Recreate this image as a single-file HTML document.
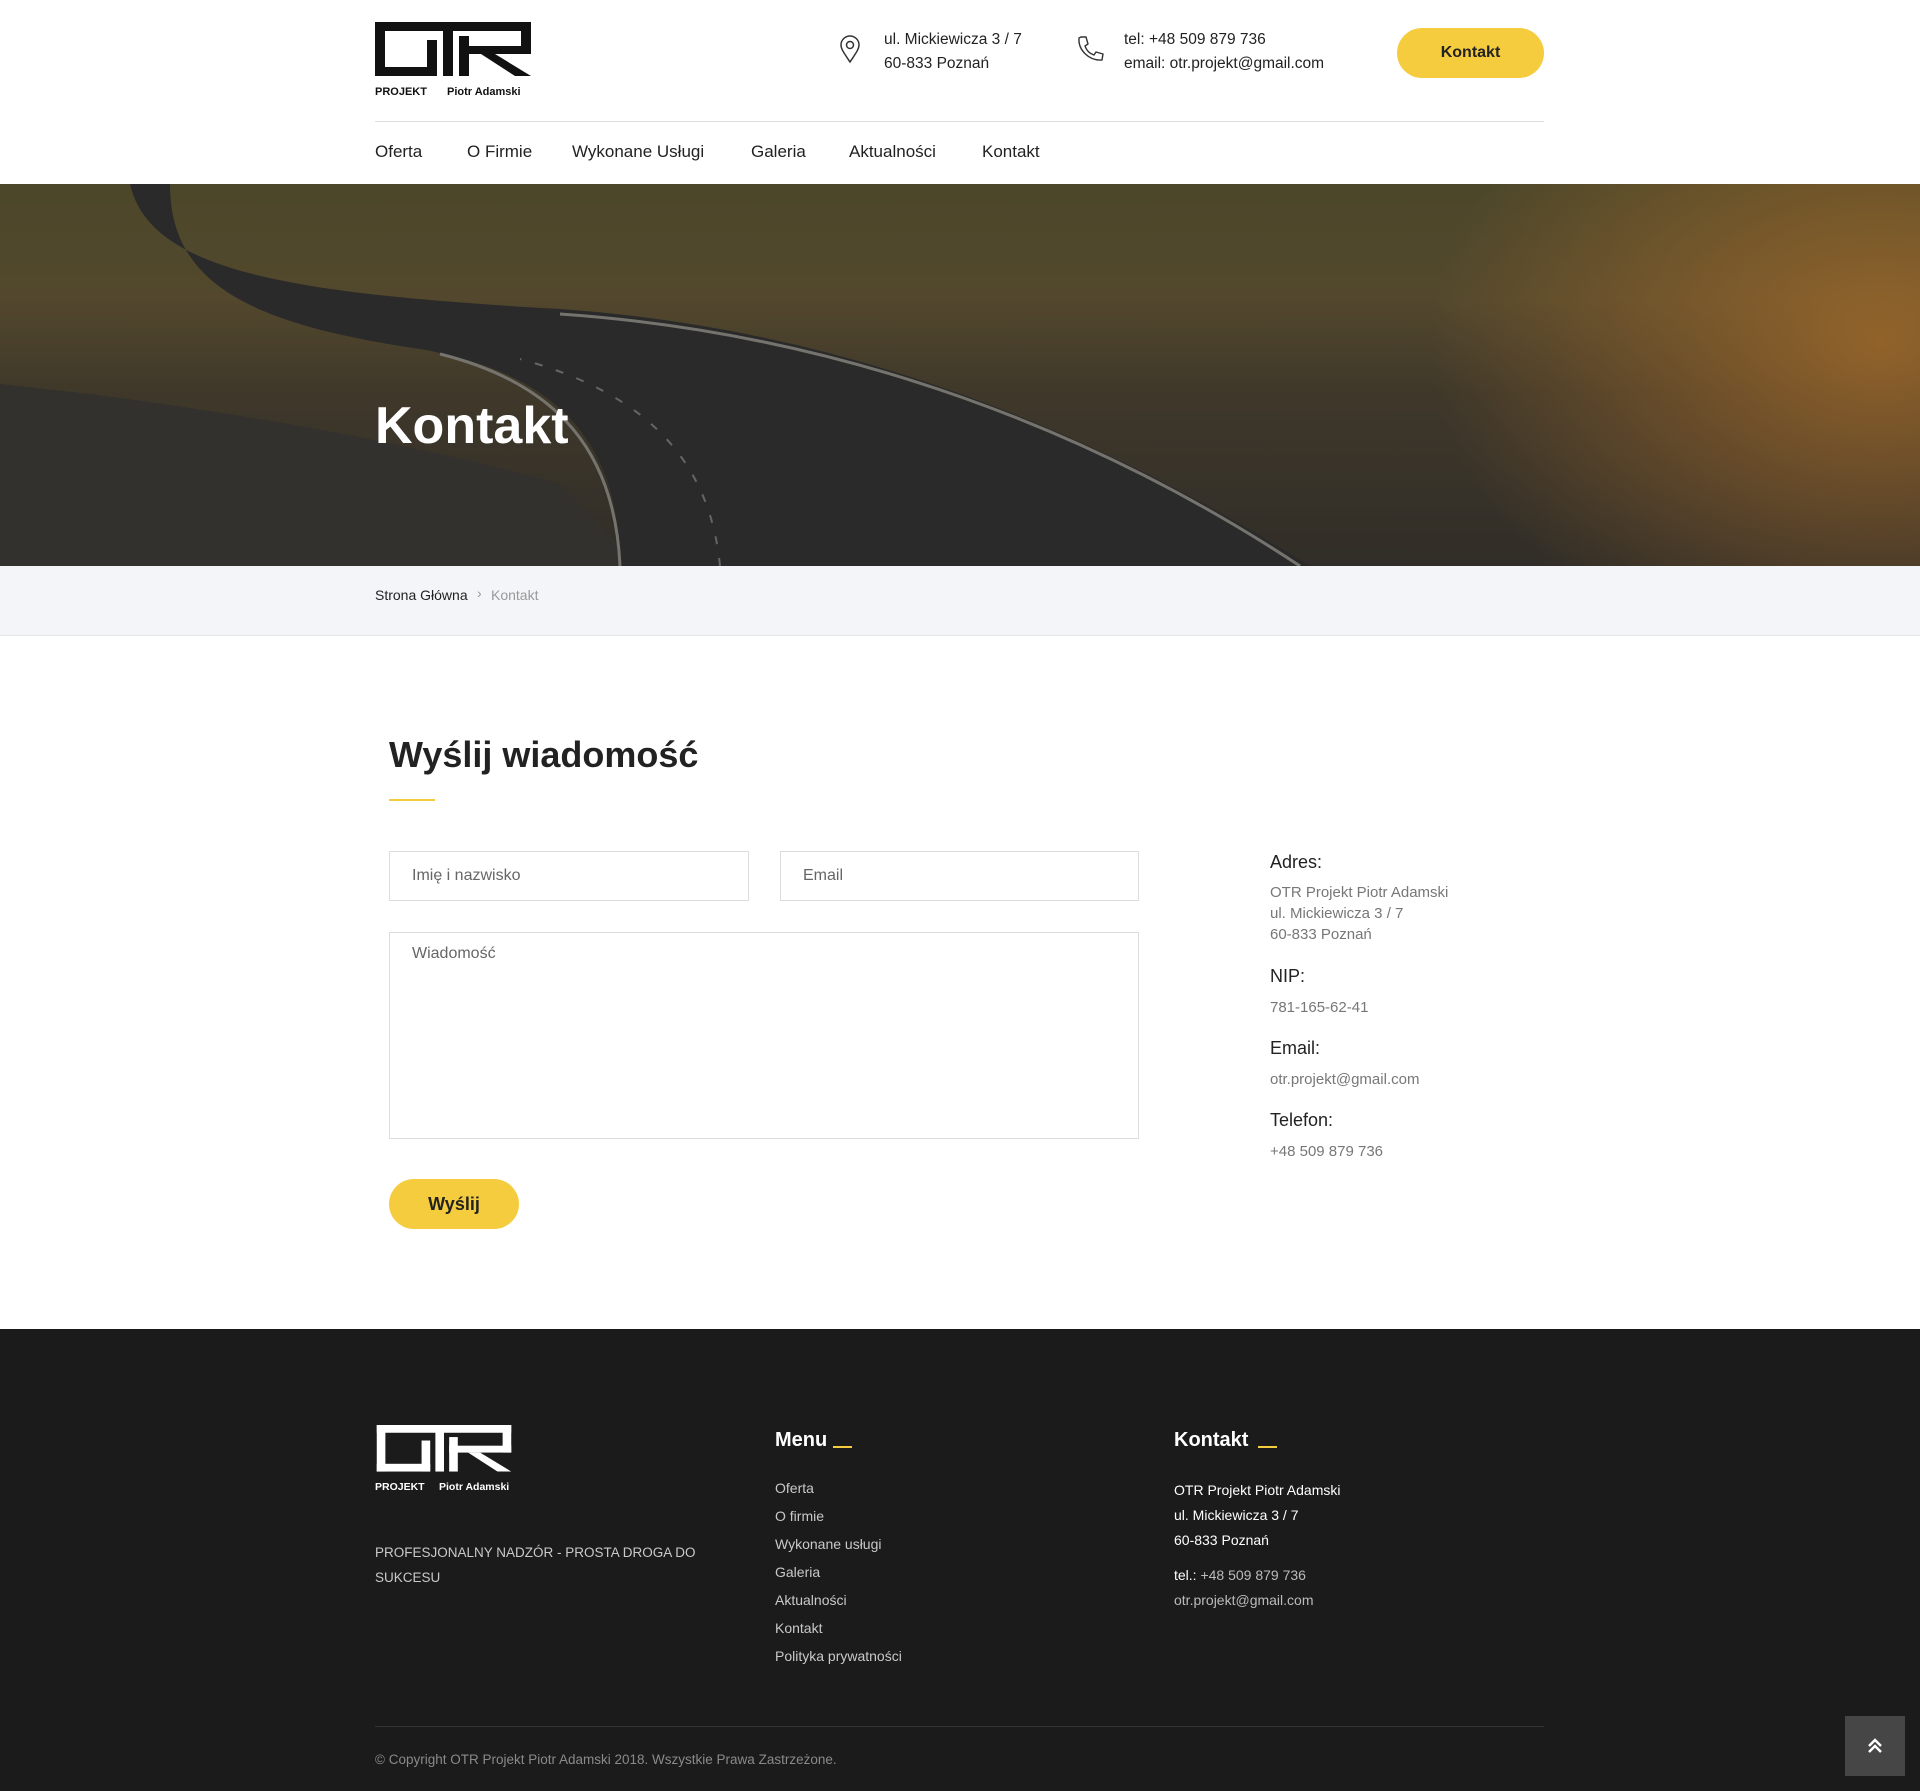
<!DOCTYPE html>
<html><head><meta charset="utf-8">
<style>
*{margin:0;padding:0;box-sizing:border-box}
body{width:1920px;height:1791px;position:relative;background:#fff;font-family:"Liberation Sans",sans-serif;color:#222;overflow:hidden}
.a{position:absolute;white-space:nowrap}
.nav{font-size:17px;color:#222;top:142px}
.hdr{font-size:15.5px;color:#222;line-height:24px}
.lbl{font-size:18px;color:#222}
.val{font-size:15px;color:#777;line-height:21px}
.inp{position:absolute;border:1px solid #dcdcdc;background:#fff;font-size:16px;color:#666;padding:0 22px}
.fm{font-size:14px;color:#c9c9c9}
.fk{font-size:14px;color:#fff}
</style></head><body>

<svg class="a" style="left:375px;top:22px" width="156" height="58" viewBox="0 0 156 58">
<g fill="#111">
<rect x="0" y="0" width="156" height="9"/>
<rect x="0" y="0" width="10" height="54"/>
<rect x="0" y="45" width="62" height="9"/>
<rect x="52" y="18" width="10" height="36"/>
<rect x="68" y="0" width="10" height="54"/>
<rect x="84" y="14" width="10" height="40"/>
<rect x="146" y="0" width="10" height="32"/>
<rect x="84" y="24" width="72" height="8"/>
<polygon points="106,32 120,32 156,54 140,54"/>
</g></svg>
<div class="a" style="left:375px;top:86px;font-size:11px;font-weight:bold;color:#111">PROJEKT</div>
<div class="a" style="left:447px;top:86px;font-size:11px;font-weight:bold;color:#111">Piotr Adamski</div>

<svg class="a" style="left:838px;top:34px" width="24" height="30" viewBox="0 0 24 30"><path d="M12 28 C6 19 3 15 3 11 A9 9 0 0 1 21 11 C21 15 18 19 12 28Z" fill="none" stroke="#333" stroke-width="1.5"/><circle cx="12" cy="11" r="3.5" fill="none" stroke="#333" stroke-width="1.5"/></svg>
<div class="a hdr" style="left:884px;top:28px">ul. Mickiewicza 3 / 7<br>60-833 Poznań</div>
<svg class="a" style="left:1075px;top:34px" width="30" height="30" viewBox="0 0 30 30"><path d="M6 3 L11 3 L13 10 L10 12 C12 17 14 19 19 21 L21 18 L28 20 L27 26 C14 27 3 16 4 4Z" fill="none" stroke="#333" stroke-width="1.4" stroke-linejoin="round"/></svg>
<div class="a hdr" style="left:1124px;top:28px">tel: +48 509 879 736<br>email: otr.projekt@gmail.com</div>
<div class="a" style="left:1397px;top:28px;width:147px;height:50px;border-radius:25px;background:#f5cc3d;font-size:16px;font-weight:bold;color:#222;text-align:center;line-height:50px">Kontakt</div>

<div class="a" style="left:375px;top:121px;width:1169px;height:1px;background:#ddd"></div>
<div class="a nav" style="left:375px">Oferta</div>
<div class="a nav" style="left:467px">O Firmie</div>
<div class="a nav" style="left:572px">Wykonane Usługi</div>
<div class="a nav" style="left:751px">Galeria</div>
<div class="a nav" style="left:849px">Aktualności</div>
<div class="a nav" style="left:982px">Kontakt</div>

<div class="a" style="left:0;top:184px;width:1920px;height:382px;overflow:hidden;background:linear-gradient(180deg,#5a5432 0%,#625535 30%,#4a4232 55%,#3a3630 100%)">
<div style="position:absolute;inset:0;background:radial-gradient(ellipse 450px 330px at 1880px 160px,rgba(200,130,50,.75),rgba(0,0,0,0))"></div>
<svg style="position:absolute;left:0;top:0" width="1920" height="382">
<path d="M0 382 L0 200 C200 220 420 260 560 300 L640 382Z" fill="#3c3a35"/>
<path d="M130 0 C150 90 300 110 560 125 C850 145 1100 250 1310 382 L620 382 C620 260 560 190 420 165 C250 140 170 100 170 0Z" fill="#333232"/>
<path d="M620 382 C615 270 560 200 440 170" fill="none" stroke="#8a8880" stroke-width="3"/>
<path d="M720 382 C710 280 650 210 520 175" fill="none" stroke="#777" stroke-width="2" stroke-dasharray="8 14"/>
<path d="M1300 382 C1100 250 850 150 560 130" fill="none" stroke="#8a8880" stroke-width="3"/>
</svg>
<div style="position:absolute;inset:0;background:rgba(0,0,0,.15)"></div>
</div>
<div class="a" style="left:375px;top:396px;font-size:52px;font-weight:bold;color:#fff">Kontakt</div>

<div class="a" style="left:0;top:566px;width:1920px;height:70px;background:#f4f5f8;border-bottom:1px solid #e6e6e6"></div>
<div class="a" style="left:375px;top:587px;font-size:14px;color:#222">Strona Główna</div>
<div class="a" style="left:477px;top:585px;font-size:14px;color:#999">›</div>
<div class="a" style="left:491px;top:587px;font-size:14px;color:#999">Kontakt</div>

<div class="a" style="left:389px;top:734px;font-size:36px;font-weight:bold;color:#222">Wyślij wiadomość</div>
<div class="a" style="left:389px;top:799px;width:46px;height:2px;background:#f5cc3d"></div>
<div class="inp" style="left:389px;top:851px;width:360px;height:50px;line-height:48px">Imię i nazwisko</div>
<div class="inp" style="left:780px;top:851px;width:359px;height:50px;line-height:48px">Email</div>
<div class="inp" style="left:389px;top:932px;width:750px;height:207px;padding-top:12px">Wiadomość</div>
<div class="a" style="left:389px;top:1179px;width:130px;height:50px;border-radius:25px;background:#f5cc3d;font-size:18px;font-weight:bold;text-align:center;line-height:50px;color:#222">Wyślij</div>

<div class="a lbl" style="left:1270px;top:852px">Adres:</div>
<div class="a val" style="left:1270px;top:882px">OTR Projekt Piotr Adamski<br>ul. Mickiewicza 3 / 7<br>60-833 Poznań</div>
<div class="a lbl" style="left:1270px;top:966px">NIP:</div>
<div class="a val" style="left:1270px;top:997px">781-165-62-41</div>
<div class="a lbl" style="left:1270px;top:1038px">Email:</div>
<div class="a val" style="left:1270px;top:1069px">otr.projekt@gmail.com</div>
<div class="a lbl" style="left:1270px;top:1110px">Telefon:</div>
<div class="a val" style="left:1270px;top:1141px">+48 509 879 736</div>

<div class="a" style="left:0;top:1329px;width:1920px;height:462px;background:#1b1b1b"></div>
<svg class="a" style="left:375px;top:1425px" width="138" height="50" viewBox="0 0 156 58">
<g fill="#fff">
<rect x="0" y="0" width="156" height="9"/>
<rect x="0" y="0" width="10" height="54"/>
<rect x="0" y="45" width="62" height="9"/>
<rect x="52" y="18" width="10" height="36"/>
<rect x="68" y="0" width="10" height="54"/>
<rect x="84" y="14" width="10" height="40"/>
<rect x="146" y="0" width="10" height="32"/>
<rect x="84" y="24" width="72" height="8"/>
<polygon points="106,32 120,32 156,54 140,54"/>
</g></svg>
<div class="a" style="left:375px;top:1481px;font-size:10.5px;font-weight:bold;color:#fff">PROJEKT</div>
<div class="a" style="left:439px;top:1481px;font-size:10.5px;font-weight:bold;color:#fff">Piotr Adamski</div>
<div class="a" style="left:375px;top:1540px;font-size:13.5px;color:#c9c9c9;line-height:25px">PROFESJONALNY NADZÓR - PROSTA DROGA DO<br>SUKCESU</div>

<div class="a" style="left:775px;top:1429px;font-size:20px;font-weight:bold;color:#fff">Menu</div>
<div class="a" style="left:833px;top:1446px;width:19px;height:2px;background:#f5cc3d"></div>
<div class="a fm" style="left:775px;top:1480px">Oferta</div>
<div class="a fm" style="left:775px;top:1508px">O firmie</div>
<div class="a fm" style="left:775px;top:1536px">Wykonane usługi</div>
<div class="a fm" style="left:775px;top:1564px">Galeria</div>
<div class="a fm" style="left:775px;top:1592px">Aktualności</div>
<div class="a fm" style="left:775px;top:1620px">Kontakt</div>
<div class="a fm" style="left:775px;top:1648px">Polityka prywatności</div>

<div class="a" style="left:1174px;top:1429px;font-size:20px;font-weight:bold;color:#fff">Kontakt</div>
<div class="a" style="left:1258px;top:1446px;width:19px;height:2px;background:#f5cc3d"></div>
<div class="a fk" style="left:1174px;top:1478px;line-height:25px">OTR Projekt Piotr Adamski<br>ul. Mickiewicza 3 / 7<br>60-833 Poznań</div>
<div class="a fk" style="left:1174px;top:1567px">tel.: <span style="color:#bbb">+48 509 879 736</span></div>
<div class="a fm" style="left:1174px;top:1592px;color:#bbb">otr.projekt@gmail.com</div>

<div class="a" style="left:375px;top:1726px;width:1169px;height:1px;background:#333"></div>
<div class="a" style="left:375px;top:1752px;font-size:13.5px;color:#8a8a8a">© Copyright OTR Projekt Piotr Adamski 2018. Wszystkie Prawa Zastrzeżone.</div>
<div class="a" style="left:1845px;top:1716px;width:60px;height:60px;background:#464646"></div>
<svg class="a" style="left:1865px;top:1736px" width="20" height="20" viewBox="0 0 20 20"><path d="M4 10 L10 4 L16 10 M4 16 L10 10 L16 16" fill="none" stroke="#fff" stroke-width="2.5"/></svg>
</body></html>
